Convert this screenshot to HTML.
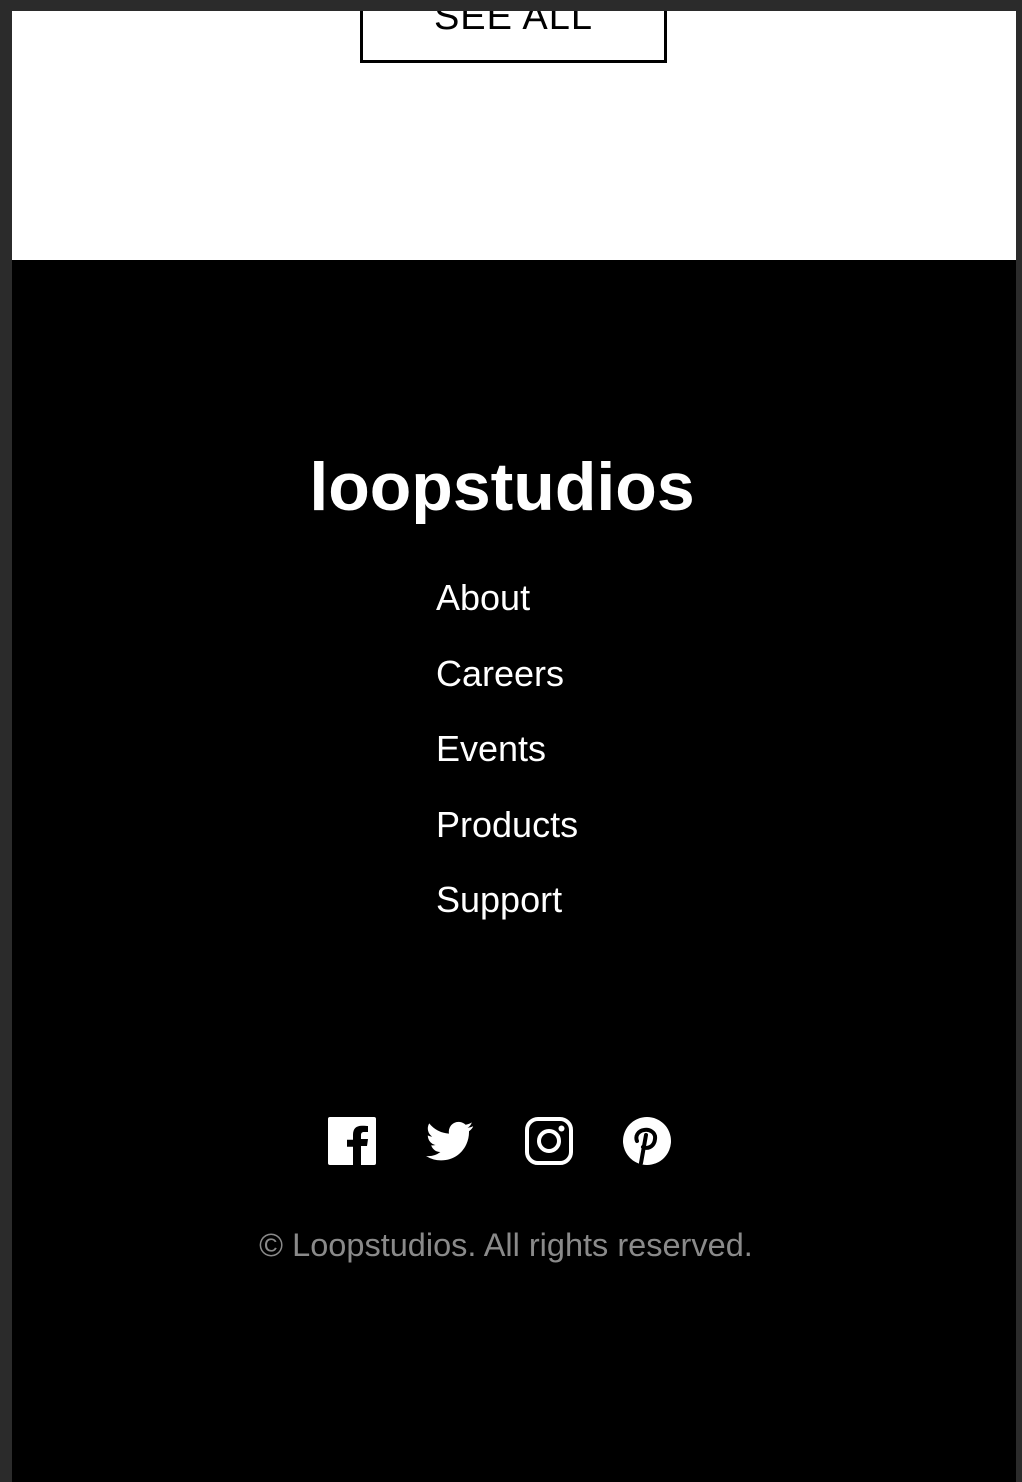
<!DOCTYPE html>
<html><head><meta charset="utf-8"><style>
html,body{margin:0;padding:0}
body{width:1022px;height:1482px;background:#2b2b2b;position:relative;overflow:hidden;font-family:"Liberation Sans",sans-serif}
.white{position:absolute;left:12px;top:11px;width:1004px;height:249px;background:#fff;overflow:hidden}
.btn{position:absolute;left:348px;top:-42px;width:301px;height:88px;border:3px solid #000;box-sizing:content-box}
.btn span{position:absolute;left:0;right:0;top:24px;text-align:center;font-size:38px;letter-spacing:1px;color:#000}
.black{position:absolute;left:12px;top:260px;width:1004px;height:1222px;background:#000}
.logo{position:absolute;left:-12px;width:1004px;top:188px;text-align:center;color:#fff;font-weight:bold;font-size:68px;letter-spacing:0px}
.links{position:absolute;left:424px;top:317px;color:#fff;font-size:36px}
.links div{height:75.5px}
.icons{position:absolute;top:857px;left:316px}
.icons svg{position:absolute;top:0}
.copy{position:absolute;top:967px;width:1004px;text-align:center;left:-8px;color:#8a8a8a;font-size:32.5px}
</style></head><body>
<div class="white"><div class="btn"><span>SEE ALL</span></div></div>
<div class="black">
<div class="logo">loopstudios</div>
<div class="links"><div>About</div><div>Careers</div><div>Events</div><div>Products</div><div>Support</div></div>
<div class="icons">
<svg style="left:0" width="48" height="48" viewBox="0 0 48 48"><rect x="0" y="0" width="48" height="48" rx="2" fill="#fff"/><path d="M33 48V29h6l1-7h-7v-4c0-2 1-3 3-3h4V9c-1 0-3-.3-6-.3-6 0-9 3-9 9v5h-6v7h6v19z" fill="#000"/></svg>
<svg style="left:98px" width="48" height="48" viewBox="0 0 24 24"><path fill="#fff" d="M23.6 4.6c-.9.4-1.8.6-2.8.8 1-.6 1.8-1.6 2.1-2.7-.9.6-2 1-3.1 1.2A4.9 4.9 0 0 0 11.5 8.3 13.9 13.9 0 0 1 1.6 3.2a4.9 4.9 0 0 0 1.5 6.6c-.8 0-1.6-.3-2.2-.6 0 2.4 1.7 4.4 3.9 4.8-.7.2-1.5.2-2.2.1.6 2 2.4 3.4 4.6 3.4A9.9 9.9 0 0 1 0 19.5 14 14 0 0 0 7.5 21.7c9.1 0 14-7.5 14-14v-.6c1-.7 1.8-1.6 2.1-2.5z"/></svg>
<svg style="left:197px" width="48" height="48" viewBox="0 0 48 48"><rect x="2" y="2" width="44" height="44" rx="11" fill="none" stroke="#fff" stroke-width="4"/><circle cx="24" cy="24" r="10" fill="none" stroke="#fff" stroke-width="4"/><circle cx="36.5" cy="11.5" r="3" fill="#fff"/></svg>
<svg style="left:295px" width="48" height="48" viewBox="0 0 48 48"><circle cx="24" cy="24" r="24" fill="#fff"/><path d="M20 30c3 2 11 1 12-8 1-7-6-10-11-9-6 1-9 6-7 11" fill="none" stroke="#000" stroke-width="4" stroke-linecap="round"/><path d="M23 18l-5 28" stroke="#000" stroke-width="4" stroke-linecap="round"/></svg>
</div>
<div class="copy">© Loopstudios. All rights reserved.</div>
</div>
</body></html>
